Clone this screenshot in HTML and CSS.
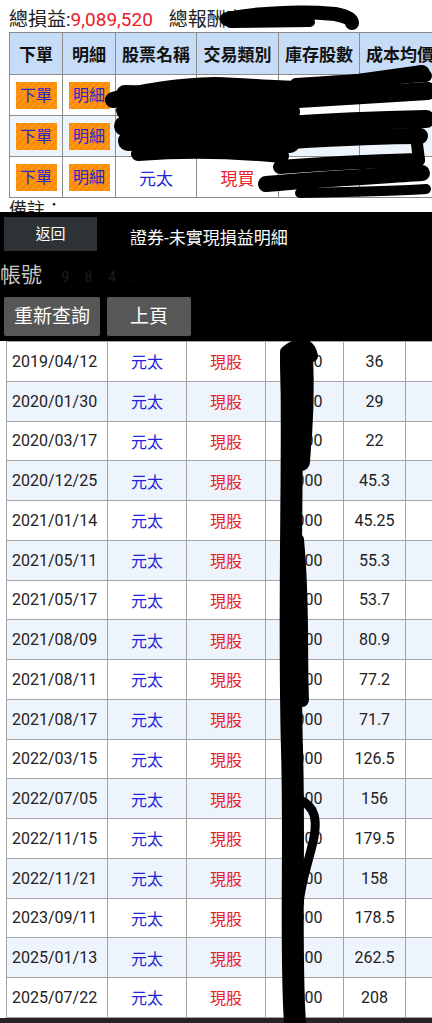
FILE: index.html
```html
<!DOCTYPE html>
<html lang="zh-Hant">
<head>
    <meta charset="UTF-8">
    <meta name="viewport" content="width=device-width, initial-scale=1.0">
    <title>證券-未實現損益明細</title>
    <link rel="stylesheet" href="styles.css">
</head>
<body>

<div class="summary">
    <div class="total">總損益:<span class="red">9,089,520</span><span class="label2">總報酬率:</span></div>
    <table class="orders">
        <colgroup>
            <col style="width:53px"><col style="width:53px"><col style="width:81px">
            <col style="width:82px"><col style="width:81px"><col style="width:81px"><col style="width:81px">
        </colgroup>
        <tr>
            <th>下單</th><th>明細</th><th>股票名稱</th><th>交易類別</th><th>庫存股數</th><th>成本均價</th><th></th>
        </tr>
        <tr>
            <td><span class="btn-order">下單</span></td><td><span class="btn-order">明細</span></td>
            <td class="blue">元太</td><td class="red">現買</td><td></td><td></td><td></td>
        </tr>
        <tr class="alt">
            <td><span class="btn-order">下單</span></td><td><span class="btn-order">明細</span></td>
            <td class="blue">元太</td><td class="red">現買</td><td></td><td></td><td></td>
        </tr>
        <tr>
            <td><span class="btn-order">下單</span></td><td><span class="btn-order">明細</span></td>
            <td class="blue">元太</td><td class="red">現買</td><td></td><td></td><td></td>
        </tr>
    </table>
    <div class="note">備註：</div>
</div>

<div class="panel">
    <div class="panel-head">
        <span class="btn-back">返回</span>
        <span class="panel-title">證券-未實現損益明細</span>
    </div>
    <div class="account">帳號 <span class="acct-no">9 8 4 .</span></div>
    <div class="actions">
        <span class="btn-gray wide">重新查詢</span>
        <span class="btn-gray">上頁</span>
    </div>
    <div class="detail-wrap">
        <table class="detail">
            <colgroup>
                <col style="width:101px"><col style="width:79px"><col style="width:79px">
                <col style="width:78px"><col style="width:62px"><col style="width:80px">
            </colgroup>
            <tr><td class="date">2019/04/12</td><td class="blue">元太</td><td class="red">現股</td><td>1000</td><td>36</td><td></td></tr>
            <tr class="alt"><td class="date">2020/01/30</td><td class="blue">元太</td><td class="red">現股</td><td>1000</td><td>29</td><td></td></tr>
            <tr><td class="date">2020/03/17</td><td class="blue">元太</td><td class="red">現股</td><td>1000</td><td>22</td><td></td></tr>
            <tr class="alt"><td class="date">2020/12/25</td><td class="blue">元太</td><td class="red">現股</td><td>1000</td><td>45.3</td><td></td></tr>
            <tr><td class="date">2021/01/14</td><td class="blue">元太</td><td class="red">現股</td><td>1000</td><td>45.25</td><td></td></tr>
            <tr class="alt"><td class="date">2021/05/11</td><td class="blue">元太</td><td class="red">現股</td><td>1000</td><td>55.3</td><td></td></tr>
            <tr><td class="date">2021/05/17</td><td class="blue">元太</td><td class="red">現股</td><td>1000</td><td>53.7</td><td></td></tr>
            <tr class="alt"><td class="date">2021/08/09</td><td class="blue">元太</td><td class="red">現股</td><td>1000</td><td>80.9</td><td></td></tr>
            <tr><td class="date">2021/08/11</td><td class="blue">元太</td><td class="red">現股</td><td>1000</td><td>77.2</td><td></td></tr>
            <tr class="alt"><td class="date">2021/08/17</td><td class="blue">元太</td><td class="red">現股</td><td>1000</td><td>71.7</td><td></td></tr>
            <tr><td class="date">2022/03/15</td><td class="blue">元太</td><td class="red">現股</td><td>1000</td><td>126.5</td><td></td></tr>
            <tr class="alt"><td class="date">2022/07/05</td><td class="blue">元太</td><td class="red">現股</td><td>1000</td><td>156</td><td></td></tr>
            <tr><td class="date">2022/11/15</td><td class="blue">元太</td><td class="red">現股</td><td>1000</td><td>179.5</td><td></td></tr>
            <tr class="alt"><td class="date">2022/11/21</td><td class="blue">元太</td><td class="red">現股</td><td>1000</td><td>158</td><td></td></tr>
            <tr><td class="date">2023/09/11</td><td class="blue">元太</td><td class="red">現股</td><td>1000</td><td>178.5</td><td></td></tr>
            <tr class="alt"><td class="date">2025/01/13</td><td class="blue">元太</td><td class="red">現股</td><td>1000</td><td>262.5</td><td></td></tr>
            <tr><td class="date">2025/07/22</td><td class="blue">元太</td><td class="red">現股</td><td>1000</td><td>208</td><td></td></tr>
        </table>
    </div>
    <div class="navbar"></div>
</div>

<!-- redaction marks drawn over the screenshot -->
<svg class="scribble" width="432" height="1023" viewBox="0 0 432 1023">
    <g fill="none" stroke="#000" stroke-linecap="round" stroke-linejoin="round">
        <path d="M227 19 C255 13 300 11 335 14 C346 16 352 19 352 23" stroke-width="14"/>
        <path d="M230 23 L310 22" stroke-width="10"/>

        <path d="M113 100 C140 92 170 86 215 85 C260 86 300 92 330 86 C370 80 400 76 422 73" stroke-width="16"/>
        <path d="M125 94 L285 98" stroke-width="18"/>
        <path d="M126 110 C170 106 230 108 290 112" stroke-width="20"/>
        <path d="M124 126 C180 121 240 123 292 127" stroke-width="20"/>
        <path d="M128 141 C180 137 240 139 290 143" stroke-width="20"/>
        <path d="M138 154 C190 150 240 152 282 156" stroke-width="14"/>
        <path d="M282 100 C330 97 380 94 428 91" stroke-width="18"/>
        <path d="M296 84 C350 80 390 78 426 76" stroke-width="12"/>
        <path d="M286 125 C330 122 380 120 426 119" stroke-width="18"/>
        <path d="M290 141 C340 138 380 136 420 136" stroke-width="16"/>
        <path d="M414 120 L419 160" stroke-width="12"/>
        <path d="M266 184 C320 179 380 176 422 173" stroke-width="16"/>
        <path d="M280 167 C330 163 380 161 418 160" stroke-width="14"/>
        <path d="M300 193 C350 192 400 191 426 189" stroke-width="10"/>

        <path d="M291 355 C294 450 288 600 292 750 C295 850 290 950 295 1023" stroke-width="22"/>
        <path d="M288 360 C290 420 292 480 290 540" stroke-width="16"/>
        <path d="M286 352 C297 342 309 342 312 356" stroke-width="12"/>
        <path d="M300 356 C303 400 303 430 301 462" stroke-width="18"/>
        <path d="M309 352 C311 400 309 430 306 458" stroke-width="8"/>
        <path d="M297 540 C303 600 300 650 302 700" stroke-width="14"/>
        <path d="M300 800 C314 806 320 818 311 850 C306 870 301 882 299 905" stroke-width="9"/>
    </g>
</svg>

</body>
</html>
```

FILE: styles.css
```css
/* Global */
body {
    margin: 0;
    width: 432px;
    height: 1023px;
    overflow: hidden;
    position: relative;
    background-color: #000;
    font-family: Roboto, "Noto Sans CJK TC", sans-serif;
    color: #222;
}

.blue { color: #2424d8; }
.red { color: #e8202a; }

/* Summary block */
.summary {
    background-color: #fff;
    height: 212px;
    overflow: hidden;
}

.total {
    padding: 8px 0 0 9px;
    height: 24px;
    line-height: 24px;
    font-size: 19px;
    white-space: nowrap;
}

.total .label2 {
    margin-left: 16px;
}

.orders {
    margin-left: 9px;
    border-collapse: collapse;
    table-layout: fixed;
    width: 512px;
}

.orders th,
.orders td {
    border: 1px solid #8c8c8c;
    text-align: center;
    font-size: 17px;
    padding: 0;
    white-space: nowrap;
}

.orders th {
    height: 41px;
    background-color: #c7dcf7;
    font-weight: bold;
    color: #111;
}

.orders td {
    height: 40px;
}

.orders tr.alt td {
    background-color: #eef4fc;
}

.btn-order {
    display: inline-block;
    width: 41px;
    height: 27px;
    line-height: 27px;
    font-size: 16px;
    color: #2828c8;
    background: repeating-linear-gradient(135deg, #ff8a00 0 3px, #f59a1c 3px 5px);
}

.note {
    padding-left: 9px;
    font-size: 18px;
    line-height: 24px;
}

/* Detail panel */
.panel-head {
    height: 45px;
    display: flex;
    align-items: flex-start;
}

.btn-back {
    margin: 5px 0 0 4px;
    width: 93px;
    height: 34px;
    line-height: 34px;
    text-align: center;
    background-color: #2d3234;
    color: #fff;
    font-size: 15px;
}

.panel-title {
    margin: 12px 0 0 33px;
    font-size: 17px;
    color: #fff;
}

.account {
    height: 36px;
    line-height: 36px;
    font-size: 21px;
    color: #c8c8c8;
}

.acct-no {
    margin-left: 14px;
    font-size: 14px;
    color: #1e1e1e;
    letter-spacing: 6px;
}

.actions {
    display: flex;
    gap: 7px;
    padding: 4px 4px 5px;
}

.btn-gray {
    width: 84px;
    height: 39px;
    line-height: 39px;
    text-align: center;
    background-color: #575757;
    color: #fff;
    font-size: 19px;
    border-radius: 2px;
}

.btn-gray.wide {
    width: 96px;
}

.detail-wrap {
    background-color: #fff;
    padding-left: 6px;
}

.detail {
    border-collapse: collapse;
    table-layout: fixed;
    width: 479px;
}

.detail td {
    height: 38.75px;
    padding: 0;
    border: 1px solid #a4a4a4;
    text-align: center;
    font-size: 16px;
}

.detail tr.alt td {
    background-color: #eef4fc;
}

.detail td.date {
    text-align: left;
    padding-left: 5px;
}

.navbar {
    height: 8px;
    background-color: #232323;
}

.scribble {
    position: absolute;
    top: 0;
    left: 0;
    pointer-events: none;
}
```
